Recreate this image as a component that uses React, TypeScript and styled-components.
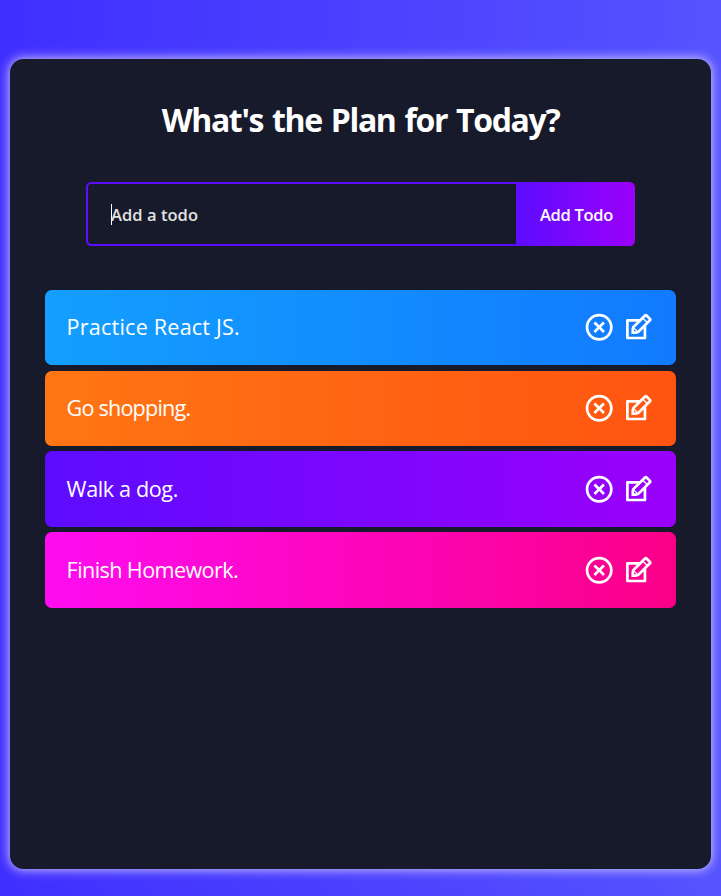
import React from 'react';
import styled, { createGlobalStyle } from 'styled-components';
import { RiCloseCircleLine } from 'react-icons/ri';
import { TiEdit } from 'react-icons/ti';

const GlobalStyle = createGlobalStyle`
  * { box-sizing: border-box; margin: 0; padding: 0; }
  body {
    font-family: 'Open Sans', 'Noto Sans', sans-serif;
    background: #4a41ff;
  }
`;

const Page = styled.div`
  min-height: 896px;
  padding: 59px 10px 27px;
  background: linear-gradient(90deg, #402fff 0%, #5653ff 100%);
`;

const Panel = styled.main`
  height: 810px;
  padding: 0 35px;
  border-radius: 13.5px;
  background: #171a2a;
  box-shadow: 0 0 11px 1px rgba(225, 215, 255, 0.85);
`;

const Title = styled.h1`
  padding-top: 37px;
  height: 123px;
  text-align: center;
  font-size: 32px;
  line-height: 48px;
  font-weight: 700;
  letter-spacing: -1.36px;
  word-spacing: 2px;
  white-space: nowrap;
  color: #fff;
`;

const Form = styled.form`
  display: flex;
  width: 549px;
  height: 64px;
  margin: 0 auto 43.8px;
`;

const Field = styled.div`
  display: flex;
  align-items: center;
  width: 430px;
  padding: 2px 0 0 23px;
  border: 2px solid #5d0cff;
  border-right: 0;
  border-radius: 5.4px 0 0 5.4px;
`;

const Caret = styled.i`
  width: 1px;
  height: 21px;
  margin: -2px -1px 0 0;
  background: #fff;
`;

const Placeholder = styled.span`
  font-size: 16.5px;
  font-weight: 600;
  line-height: 24px;
  letter-spacing: 0.05px;
  white-space: nowrap;
  color: #e2e2e2;
`;

const AddButton = styled.button`
  width: 119px;
  padding: 2px 0 0 2px;
  border: 0;
  border-radius: 0 5.4px 5.4px 0;
  background: linear-gradient(90deg, #5d0cff 0%, #9b00fa 100%);
  color: #fff;
  font: 600 16.5px/24px 'Open Sans', 'Noto Sans', sans-serif;
  letter-spacing: -0.3px;
  white-space: nowrap;
`;

const List = styled.ul`
  display: flex;
  flex-direction: column;
  gap: 5.4px;
  list-style: none;
`;

const Row = styled.li<{ $from: string; $to: string }>`
  display: flex;
  align-items: center;
  justify-content: space-between;
  height: 75.4px;
  padding: 0 21.4px 0 21.6px;
  border-radius: 6.75px;
  background: linear-gradient(90deg, ${(p) => p.$from} 0%, ${(p) => p.$to} 100%);
  color: #fff;
`;

const Label = styled.span<{ $spacing: number }>`
  font-size: 21.6px;
  line-height: 30px;
  letter-spacing: ${(p) => p.$spacing}px;
  white-space: nowrap;
`;

const Actions = styled.div`
  display: flex;
  align-items: center;
  gap: 6.4px;
  font-size: 32.4px;

  svg { display: block; }
`;

const todos = [
  { text: 'Practice React JS.', from: '#149fff', to: '#117aff', spacing: 0.2 },
  { text: 'Go shopping.', from: '#ff7614', to: '#ff5411', spacing: -0.8 },
  { text: 'Walk a dog.', from: '#5d0cff', to: '#9b00fa', spacing: -0.38 },
  { text: 'Finish Homework.', from: '#ff0cf1', to: '#fa0087', spacing: -0.6 },
];

export default function App() {
  return (
    <Page>
      <GlobalStyle />
      <Panel>
        <Title>What's the Plan for Today?</Title>
        <Form>
          <Field>
            <Caret />
            <Placeholder>Add a todo</Placeholder>
          </Field>
          <AddButton type="button">Add Todo</AddButton>
        </Form>
        <List>
          {todos.map((todo) => (
            <Row key={todo.text} $from={todo.from} $to={todo.to}>
              <Label $spacing={todo.spacing}>{todo.text}</Label>
              <Actions>
                <RiCloseCircleLine />
                <TiEdit />
              </Actions>
            </Row>
          ))}
        </List>
      </Panel>
    </Page>
  );
}
